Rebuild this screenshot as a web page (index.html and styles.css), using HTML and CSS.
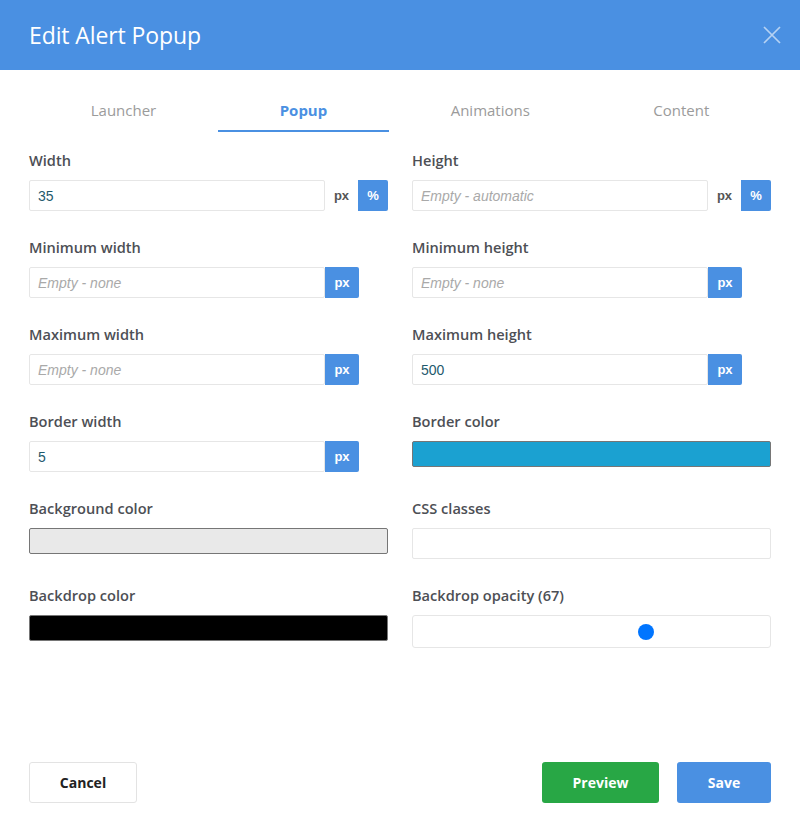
FILE: index.html
```html
<!DOCTYPE html>
<html>
<head>
<meta charset="utf-8">
<title>Edit Alert Popup</title>
<link rel="stylesheet" href="styles.css">
</head>
<body>

<div class="modal">

  <header class="modal-header">
    <h1>Edit Alert Popup</h1>
    <button class="close" type="button" aria-label="Close">
      <svg width="18" height="18" viewBox="0 0 18 18">
        <path d="M1 1 L17 17 M17 1 L1 17" />
      </svg>
    </button>
  </header>

  <div class="modal-body">

    <nav class="tabs">
      <a class="tab">Launcher</a>
      <a class="tab active">Popup</a>
      <a class="tab">Animations</a>
      <a class="tab">Content</a>
    </nav>

    <div class="form-grid">

      <div class="field">
        <label>Width</label>
        <div class="input-row">
          <input class="text" type="text" value="35">
          <span class="unit">px</span>
          <span class="addon">%</span>
        </div>
      </div>

      <div class="field">
        <label>Height</label>
        <div class="input-row">
          <input class="text" type="text" placeholder="Empty - automatic">
          <span class="unit">px</span>
          <span class="addon">%</span>
        </div>
      </div>

      <div class="field">
        <label>Minimum width</label>
        <div class="input-row">
          <input class="text" type="text" placeholder="Empty - none">
          <span class="addon addon-px">px</span>
        </div>
      </div>

      <div class="field">
        <label>Minimum height</label>
        <div class="input-row">
          <input class="text" type="text" placeholder="Empty - none">
          <span class="addon addon-px">px</span>
        </div>
      </div>

      <div class="field">
        <label>Maximum width</label>
        <div class="input-row">
          <input class="text" type="text" placeholder="Empty - none">
          <span class="addon addon-px">px</span>
        </div>
      </div>

      <div class="field">
        <label>Maximum height</label>
        <div class="input-row">
          <input class="text" type="text" value="500">
          <span class="addon addon-px">px</span>
        </div>
      </div>

      <div class="field">
        <label>Border width</label>
        <div class="input-row">
          <input class="text" type="text" value="5">
          <span class="addon addon-px">px</span>
        </div>
      </div>

      <div class="field">
        <label>Border color</label>
        <div class="swatch swatch-blue"></div>
      </div>

      <div class="field">
        <label>Background color</label>
        <div class="swatch swatch-grey"></div>
      </div>

      <div class="field">
        <label>CSS classes</label>
        <input class="text full" type="text">
      </div>

      <div class="field">
        <label>Backdrop color</label>
        <div class="swatch swatch-black"></div>
      </div>

      <div class="field">
        <label>Backdrop opacity (67)</label>
        <div class="range-box">
          <input class="range" type="range" min="0" max="100" value="67">
        </div>
      </div>

    </div>
  </div>

  <footer class="modal-footer">
    <button class="btn btn-cancel" type="button">Cancel</button>
    <div class="actions">
      <button class="btn btn-preview" type="button">Preview</button>
      <button class="btn btn-save" type="button">Save</button>
    </div>
  </footer>

</div>

</body>
</html>
```

FILE: styles.css
```css
body {
  margin: 0;
  background: #fff;
  font-family: "Open Sans", "Noto Sans", sans-serif;
}

.modal {
  display: flex;
  flex-direction: column;
  height: 832px;
}

/* Header */

.modal-header {
  height: 70px;
  background: #4a90e2;
  display: flex;
  align-items: center;
  justify-content: space-between;
  padding: 0 19px 0 29px;
}

.modal-header h1 {
  margin: 0;
  color: #fff;
  font-size: 23px;
  font-weight: 400;
  letter-spacing: -0.1px;
}

.close {
  border: 0;
  background: none;
  padding: 0;
  width: 18px;
  height: 18px;
  cursor: pointer;
}

.close path {
  stroke: rgba(255, 255, 255, 0.6);
  stroke-width: 1.7;
  fill: none;
}

.modal-body {
  padding: 0 29px;
}

/* Tabs */

.tabs {
  display: flex;
  margin-top: 20px;
}

.tab {
  flex: 1 1 auto;
  text-align: center;
  padding: 10px 0;
  line-height: 20px;
  font-size: 15px;
  color: #9b9b9b;
  border-bottom: 2px solid transparent;
}

.tab.active {
  color: #4a90e2;
  font-weight: 700;
  border-bottom-color: #4a90e2;
}

/* Form */

.form-grid {
  display: grid;
  grid-template-columns: 1fr 1fr;
  column-gap: 24px;
  row-gap: 26px;
  margin-top: 18px;
}

.field label {
  display: block;
  height: 20px;
  line-height: 20px;
  margin-bottom: 10px;
  font-size: 14.6px;
  font-weight: 600;
  color: #4d4f55;
}

.input-row {
  display: flex;
  align-items: stretch;
  height: 31px;
}

.text {
  box-sizing: border-box;
  width: 296px;
  height: 31px;
  margin: 0;
  padding: 0 8px;
  border: 1px solid #e6e6e6;
  border-radius: 2px;
  font-family: "Liberation Sans", Arial, sans-serif;
  font-size: 14px;
  color: #1f5a6d;
  outline: none;
}

.text::placeholder {
  color: #a9a9a9;
  font-style: italic;
}

.text.full {
  width: 100%;
}

.unit {
  width: 33px;
  display: flex;
  align-items: center;
  justify-content: center;
  font-family: "Liberation Sans", Arial, sans-serif;
  font-size: 13px;
  font-weight: 700;
  color: #555;
}

.addon {
  width: 30px;
  display: flex;
  align-items: center;
  justify-content: center;
  background: #4a90e2;
  color: #fff;
  font-family: "Liberation Sans", Arial, sans-serif;
  font-size: 13px;
  font-weight: 700;
  border-radius: 0 2px 2px 0;
}

.addon-px {
  width: 34px;
}

.swatch {
  box-sizing: border-box;
  height: 26px;
  border: 1px solid #767676;
  border-radius: 2px;
}

.swatch-blue  { background: #1ba1d1; }
.swatch-grey  { background: #e9e9e9; }
.swatch-black { background: #000; }

.range-box {
  box-sizing: border-box;
  height: 33px;
  border: 1px solid #e6e6e6;
  border-radius: 3px;
  padding: 0 10px;
  display: flex;
  align-items: center;
}

.range {
  -webkit-appearance: none;
  appearance: none;
  width: 100%;
  height: 16px;
  margin: 0;
  background: transparent;
}

.range::-webkit-slider-runnable-track {
  height: 16px;
  background: transparent;
}

.range::-webkit-slider-thumb {
  -webkit-appearance: none;
  width: 16px;
  height: 16px;
  border-radius: 50%;
  background: #0075ff;
  border: 0;
}

/* Footer */

.modal-footer {
  margin-top: auto;
  display: flex;
  justify-content: space-between;
  padding: 0 29px 29px;
}

.actions {
  display: flex;
  gap: 18px;
}

.btn {
  height: 41px;
  border-radius: 3px;
  font-family: "Open Sans", "Noto Sans", sans-serif;
  font-size: 14px;
  font-weight: 700;
  cursor: pointer;
}

.btn-cancel {
  width: 108px;
  background: #fff;
  color: #222;
  border: 1px solid #e3e3e3;
}

.btn-preview {
  width: 117px;
  background: #28a745;
  color: #fff;
  border: 0;
}

.btn-save {
  width: 94px;
  background: #4a90e2;
  color: #fff;
  border: 0;
}
```
